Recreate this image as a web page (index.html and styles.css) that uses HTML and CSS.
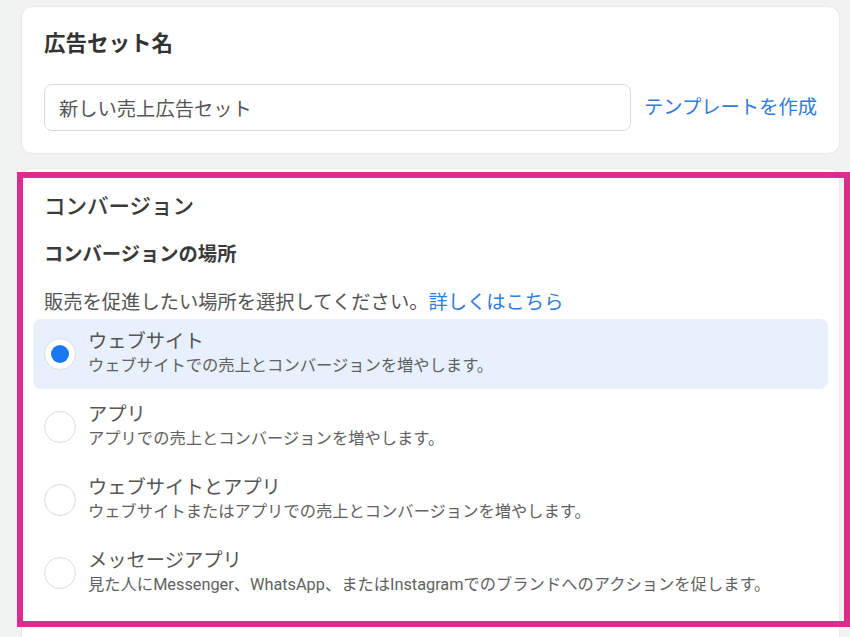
FILE: index.html
```html
<!DOCTYPE html>
<html lang="ja">
<head>
    <meta charset="UTF-8">
    <meta name="viewport" content="width=device-width, initial-scale=1.0">
    <title>広告セット</title>
    <link rel="stylesheet" href="styles.css">
</head>
<body>
    <div class="page">
        <section class="card">
            <h2 class="card-title">広告セット名</h2>
            <div class="name-row">
                <input class="name-input" type="text" value="新しい売上広告セット">
                <a class="link template-link" href="#">テンプレートを作成</a>
            </div>
        </section>

        <section class="card card-conversion">
            <div class="highlight"></div>
            <h2 class="section-title">コンバージョン</h2>
            <h3 class="field-label">コンバージョンの場所</h3>
            <p class="hint">販売を促進したい場所を選択してください。<a class="link" href="#">詳しくはこちら</a></p>
            <ul class="options">
                <li class="option selected">
                    <span class="radio"></span>
                    <div class="option-text">
                        <div class="option-title">ウェブサイト</div>
                        <div class="option-desc">ウェブサイトでの売上とコンバージョンを増やします。</div>
                    </div>
                </li>
                <li class="option">
                    <span class="radio"></span>
                    <div class="option-text">
                        <div class="option-title">アプリ</div>
                        <div class="option-desc">アプリでの売上とコンバージョンを増やします。</div>
                    </div>
                </li>
                <li class="option">
                    <span class="radio"></span>
                    <div class="option-text">
                        <div class="option-title">ウェブサイトとアプリ</div>
                        <div class="option-desc">ウェブサイトまたはアプリでの売上とコンバージョンを増やします。</div>
                    </div>
                </li>
                <li class="option">
                    <span class="radio"></span>
                    <div class="option-text">
                        <div class="option-title">メッセージアプリ</div>
                        <div class="option-desc">見た人にMessenger、WhatsApp、またはInstagramでのブランドへのアクションを促します。</div>
                    </div>
                </li>
            </ul>
        </section>
    </div>
</body>
</html>
```

FILE: styles.css
```css
html, body {
    margin: 0;
    height: 100%;
    overflow: hidden;
}
body {
    font-family: Roboto, "Noto Sans CJK JP", sans-serif;
    background-color: #f1f2f2;
    color: #555;
}
.page {
    padding: 7px 11px 0 22px;
    display: flex;
    flex-direction: column;
    gap: 16px;
}
.card {
    background-color: #fff;
    border-radius: 10px;
    box-shadow: 0 0 2px rgba(0,0,0,0.12);
    padding: 24px 22px 22px 22px;
}
.card-title,
.section-title {
    margin: 0;
    font-size: 21.5px;
    line-height: 26px;
    color: #333;
}
.card-title {
    font-weight: 700;
}
.section-title {
    font-weight: 500;
    color: #3a3a3a;
}
.name-row {
    display: flex;
    align-items: center;
    gap: 13px;
    margin-top: 27px;
}
.name-input {
    flex: 1;
    min-width: 0;
    height: 47px;
    box-sizing: border-box;
    border: 1px solid #dadbdc;
    border-radius: 8px;
    padding: 0 14px;
    font-family: inherit;
    font-size: 19.3px;
    color: #555;
    outline: none;
}
.link {
    color: #2f7bd9;
    text-decoration: none;
}
.template-link {
    font-size: 19.3px;
    padding-bottom: 4px;
}
.card-conversion {
    position: relative;
    padding-top: 25px;
    padding-bottom: 40px;
}
/* pink annotation frame drawn over the card */
.highlight {
    position: absolute;
    left: -5px;
    top: 3px;
    right: -11px;
    height: 455px;
    box-sizing: border-box;
    border: 6px solid #e02a8e;
    pointer-events: none;
}
.field-label {
    margin: 23px 0 0 0;
    font-size: 19.3px;
    line-height: 24px;
    font-weight: 700;
    color: #3a3a3a;
}
.hint {
    margin: 24px 0 0 0;
    font-size: 19.3px;
    line-height: 24px;
}
.options {
    list-style: none;
    margin: 4px -11px 0 -11px;
    padding: 0;
    display: flex;
    flex-direction: column;
    gap: 3px;
}
.option {
    display: flex;
    align-items: center;
    gap: 12px;
    padding: 11px 11px 12px 11px;
    border-radius: 8px;
}
.option.selected {
    background-color: #e7f0fc;
}
.radio {
    width: 32px;
    height: 32px;
    box-sizing: border-box;
    border-radius: 50%;
    border: 1.5px solid #dcdddf;
    background-color: #fff;
    flex-shrink: 0;
    display: flex;
    align-items: center;
    justify-content: center;
}
.option.selected .radio::after {
    content: "";
    width: 18px;
    height: 18px;
    border-radius: 50%;
    background-color: #1877f2;
}
.option-title {
    font-size: 19.3px;
    line-height: 24px;
    color: #555;
}
.option-desc {
    font-size: 16.3px;
    line-height: 23px;
    color: #616161;
}
```
